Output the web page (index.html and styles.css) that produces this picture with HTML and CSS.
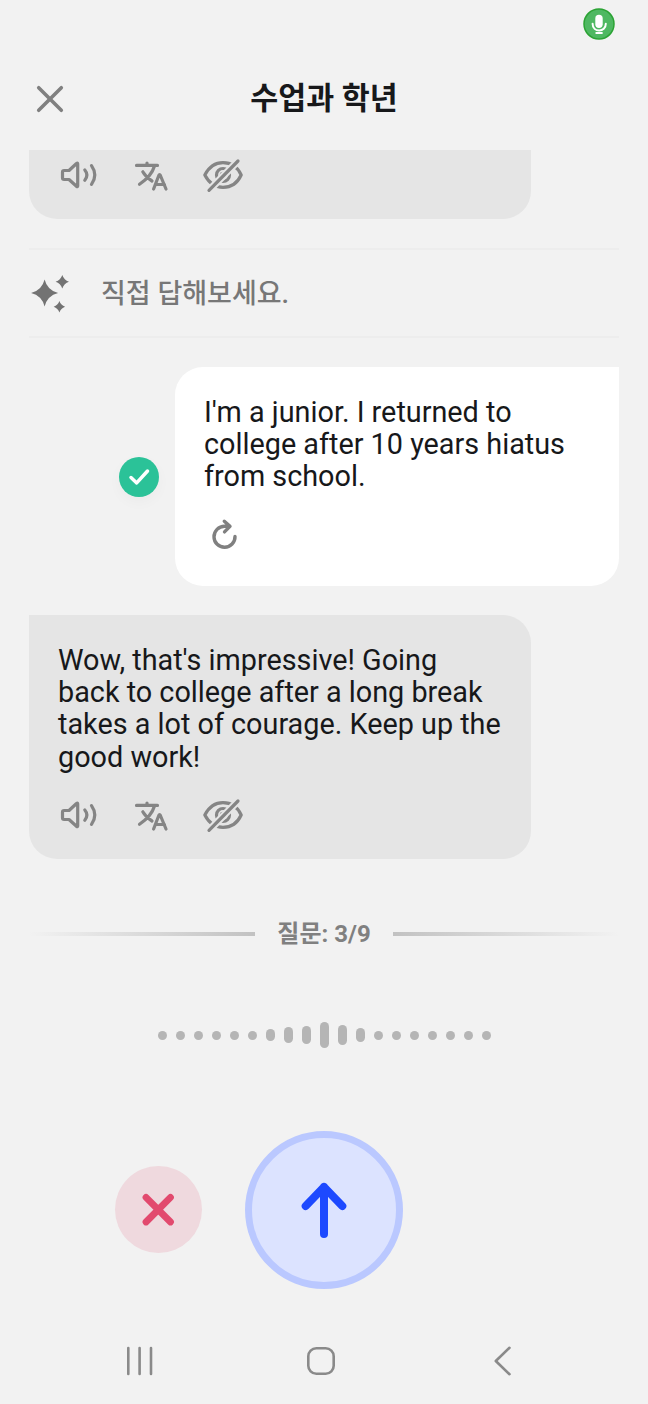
FILE: index.html
```html
<!DOCTYPE html>
<html lang="ko">
<head>
<meta charset="utf-8">
<title>수업과 학년</title>
<link rel="stylesheet" href="styles.css">
</head>
<body>
<svg class="defs" width="0" height="0">
  <symbol id="speaker" viewBox="0 0 44 40"><path d="M4.500 17.200q0-1.700 1.700-1.700h4.800L18.500 8.500q1.200-.8 1.200.6v21.600q0 1.400-1.200.6L11 24.500H6.200q-1.700 0-1.700-1.700zM26.800 15q4.200 5 0 10.200M33.500 10.600q6.600 9.400 0 18.800"/></symbol>
  <symbol id="translate" viewBox="0 0 44 40"><path d="M6.500 10.400h21M17 8v2.400M24.300 11.500Q21.500 21 9.500 29.300M12.800 16.800Q16 22.500 22 26M23.600 34l5.200-13.500q.8-1.800 1.600 0L36 34M25.500 29.500h9"/></symbol>
  <symbol id="eye-off" viewBox="0 0 44 40"><path d="M3.800 20C8 12 14.500 7.700 22 7.700S36.500 12 40.200 20C36.500 28 29.500 32.300 22 32.300S8 28 3.800 20z"/><circle cx="22" cy="20" r="6.500"/><circle cx="22" cy="20" r="1.600"/><path class="slash-gap" d="M8 35.300L37 6"/><path d="M8 35.300L37 6"/></symbol>
</svg>
<div class="status">
  <svg class="mic" viewBox="0 0 32 32"><circle cx="16" cy="16" r="15" fill="#4fb862" stroke="#2ba334" stroke-width="1.500"/><rect x="12.300" y="6.800" width="7.400" height="13.200" rx="3.700" fill="#fff"/><path d="M9.600 15.800c0 9 13.200 9 13.200 0M13.300 25h5.600" fill="none" stroke="#fff" stroke-width="2"/></svg>
</div>
<header class="header">
  <svg class="close" viewBox="0 0 30 30"><path d="M3.700 3.700L26.300 26.300M26.300 3.700L3.700 26.300"/></svg>
  <h1 class="title">수업과 학년</h1>
</header>
<main class="chat">
  <section class="bubble bubble-bot bubble-cut">
    <div class="actions"><svg><use href="#speaker"/></svg><svg><use href="#translate"/></svg><svg><use href="#eye-off"/></svg></div>
  </section>
  <section class="notice">
    <svg class="sparkles" viewBox="0 0 44 44"><path d="M15.600 8.500q2.700 10.800 13.500 13.500-10.800 2.700-13.500 13.500-2.700-10.800-13.500-13.500 10.800-2.700 13.500-13.500zM33.300 4q1.700 5 6.700 6.700-5 1.700-6.700 6.700-1.700-5-6.700-6.700 5-1.700 6.700-6.700zM30.400 30q1.500 4.200 5.700 5.700-4.200 1.500-5.700 5.700-1.500-4.200-5.700-5.700 4.200-1.500 5.700-5.700z"/></svg>
    <span>직접 답해보세요.</span>
  </section>
  <section class="reply">
    <div class="check"><svg viewBox="0 0 40 40"><path d="M12 20.500l5.700 5.400L28.500 14"/></svg></div>
    <div class="bubble bubble-user">
      <p>I'm a junior. I returned to<br>college after 10 years hiatus<br>from school.</p>
      <svg class="retry" viewBox="0 0 40 40"><path d="M31 19.500A10.500 10.500 0 1 1 20.500 9.300h4.500M20.300 4.200L26 9.300l-5.500 5.600"/></svg>
    </div>
  </section>
  <section class="bubble bubble-bot">
    <p>Wow, that's impressive! Going<br>back to college after a long break<br>takes a lot of courage. Keep up the<br>good work!</p>
    <div class="actions"><svg><use href="#speaker"/></svg><svg><use href="#translate"/></svg><svg><use href="#eye-off"/></svg></div>
  </section>
</main>
<div class="progress"><i class="rule"></i><span>질문: 3/9</span><i class="rule rule-right"></i></div>
<div class="wave"><i></i><i></i><i></i><i></i><i></i><i></i><i class="h12"></i><i class="h16"></i><i class="h18"></i><i class="h26"></i><i class="h20"></i><i class="h14"></i><i></i><i></i><i></i><i></i><i></i><i></i><i></i></div>
<div class="controls">
  <div class="cancel"><svg viewBox="0 0 87 87"><path d="M31 31.300L55.500 56M55.500 31.300L31 56"/></svg></div>
  <div class="send"><svg viewBox="0 0 144 144"><path d="M72 96V49M53.700 68L72 49l18.300 19"/></svg></div>
</div>
<nav class="nav">
  <svg viewBox="0 0 30 30"><path d="M3.300 2v26M14.600 2v26M26 2v26"/></svg>
  <svg viewBox="0 0 30 30"><rect x="2.300" y="2.300" width="25.400" height="25.400" rx="8"/></svg>
  <svg viewBox="0 0 30 30"><path d="M22.500 1.800L8.800 15l13.700 13.200"/></svg>
</nav>
</body>
</html>
```
FILE: styles.css
```css
* { box-sizing: border-box; }
body {
  margin: 0;
  width: 648px;
  height: 1404px;
  display: flex;
  flex-direction: column;
  overflow: hidden;
  background: #f2f2f2;
  color: #17181a;
  font-family: Roboto, "Noto Sans CJK KR", sans-serif;
}
svg { display: block; flex: none; fill: none; stroke-linecap: round; stroke-linejoin: round; }
p, h1 { margin: 0; }
.defs { position: absolute; }
.status { height: 48px; display: flex; justify-content: flex-end; padding: 8px 33px 0; }
.mic { width: 32px; height: 32px; }
.header {
  height: 102px;
  display: grid;
  grid-template-columns: 30px 1fr 30px;
  align-items: center;
  padding: 0 35px;
}
.close { width: 30px; height: 30px; stroke: #808080; stroke-width: 3.6; }
.title { text-align: center; font-size: 30.4px; line-height: 40px; font-weight: 700; }
.chat { display: flex; flex-direction: column; padding: 0 29px; }
.bubble { padding: 29px 29px 0; font-size: 28.8px; line-height: 32.2px; white-space: nowrap; }
.bubble-bot { width: 501.500px; height: 243.500px; background: #e5e5e5; border-radius: 0 28px 28px 28px; }
.bubble-cut { height: 69px; padding-top: 5px; border-radius: 0 0 28px 28px; }
.actions { display: flex; gap: 28px; }
.actions svg { width: 44px; height: 40px; stroke: #858585; stroke-width: 3.2; }
.actions svg:last-child { margin-left: -1px; }
.slash-gap { stroke: #e5e5e5; stroke-width: 7.4; stroke-linecap: butt; }
p + .actions { margin-top: 22px; }
.notice {
  display: flex;
  align-items: center;
  gap: 28px;
  height: 90px;
  margin: 29px 0;
  border: solid #ededed;
  border-width: 2px 0;
  color: #777;
  font-size: 27px;
  font-weight: 500;
}
.notice span { padding-bottom: 4px; }
.sparkles { width: 44px; height: 44px; fill: #737373; }
.reply { display: flex; align-items: center; justify-content: flex-end; gap: 16px; margin-bottom: 29px; }
.check { width: 40px; height: 40px; border-radius: 50%; background: #2bc298; box-shadow: 0 5px 14px #00000008; }
.check svg { stroke: #fff; stroke-width: 3.5; }
.bubble-user { width: 444px; height: 219px; background: #fff; border-radius: 28px 0 28px 28px; }
.retry { width: 40px; height: 40px; margin-top: 24px; stroke: #808080; stroke-width: 3.4; }
.progress {
  display: flex;
  align-items: center;
  justify-content: space-between;
  height: 40px;
  margin: 55.500px 29px 0;
  color: #808080;
  font-size: 24px;
  font-weight: 700;
}
.progress span { padding-bottom: 6px; }
.rule { width: 226px; height: 4px; background: linear-gradient(90deg, #f2f2f2, #c2c2c2); }
.rule-right { background: linear-gradient(270deg, #f2f2f2, #c2c2c2); }
.wave { display: flex; align-items: center; justify-content: center; gap: 9px; height: 30px; margin-top: 66px; }
.wave i { width: 9px; height: 9px; border-radius: 5px; background: #b5b5b5; }
.wave .h12 { height: 12px; }
.wave .h14 { height: 14px; }
.wave .h16 { height: 16px; }
.wave .h18 { height: 18px; }
.wave .h20 { height: 20px; }
.wave .h26 { height: 26px; }
.controls { display: flex; align-items: center; gap: 43px; height: 158px; margin-top: 80.500px; padding-left: 115px; }
.cancel { width: 87px; height: 87px; border-radius: 50%; background: #efd9de; }
.cancel svg { stroke: #e24a6e; stroke-width: 6.8; }
.send { width: 158px; height: 158px; border: 7px solid #bac8ff; border-radius: 50%; background: #dce3ff; }
.send svg { stroke: #1d49ff; stroke-width: 8; }
.nav { display: flex; justify-content: space-between; margin-top: 57px; padding: 0 131px 0 125px; }
.nav svg { width: 30px; height: 30px; stroke: #8a8a8a; stroke-width: 2.6; }
```
